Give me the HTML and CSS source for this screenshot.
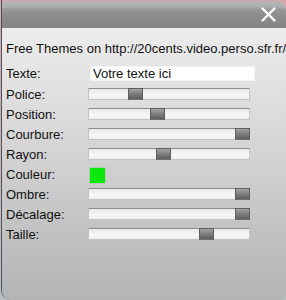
FILE: index.html
```html
<!DOCTYPE html>
<html lang="fr">
<head>
  <meta charset="UTF-8">
  <meta name="viewport" content="width=device-width, initial-scale=1.0">
  <title>Free Themes</title>
  <link rel="stylesheet" href="styles.css">
</head>
<body>
  <div id="window">
    <div class="titlebar">
      <svg class="close" width="15" height="15" viewBox="0 0 15 15">
        <path d="M1.5 1.5 L13.5 13.5 M13.5 1.5 L1.5 13.5" stroke="#fff" stroke-width="2.4" stroke-linecap="round"/>
      </svg>
    </div>

    <div class="panel">
      <div class="credits">Free Themes on http://20cents.video.perso.sfr.fr/</div>

      <div class="row row-text">
        <div class="label">Texte:</div>
        <div class="text-box">Votre texte ici</div>
      </div>
      <div class="row">
        <div class="label">Police:</div>
        <div class="track"><div class="thumb" style="left: 40px"></div></div>
      </div>
      <div class="row">
        <div class="label">Position:</div>
        <div class="track"><div class="thumb" style="left: 62px"></div></div>
      </div>
      <div class="row">
        <div class="label">Courbure:</div>
        <div class="track"><div class="thumb" style="left: 147px"></div></div>
      </div>
      <div class="row">
        <div class="label">Rayon:</div>
        <div class="track"><div class="thumb" style="left: 68px"></div></div>
      </div>
      <div class="row">
        <div class="label">Couleur:</div>
        <div class="swatch"></div>
      </div>
      <div class="row">
        <div class="label">Ombre:</div>
        <div class="track"><div class="thumb" style="left: 147px"></div></div>
      </div>
      <div class="row">
        <div class="label">Décalage:</div>
        <div class="track"><div class="thumb" style="left: 147px"></div></div>
      </div>
      <div class="row">
        <div class="label">Taille:</div>
        <div class="track"><div class="thumb" style="left: 111px"></div></div>
      </div>
    </div>
  </div>
</body>
</html>
```

FILE: styles.css
```css
/* Page */
body {
  margin: 0;
  height: 300px;
  overflow: hidden;
  font-family: "Liberation Sans", Arial, sans-serif;
  font-size: 13px;
  color: #111;
  background: linear-gradient(180deg, #d6a8ae 0%, #c9b7b9 60%, #b9c2c0 100%);
}

/* Window frame */
#window {
  height: 300px;
  margin-left: 1px;
  border-left: 1px solid #4b4f5e;
  border-top-right-radius: 12px;
  border-bottom-left-radius: 10px;
  border-bottom-right-radius: 6px;
  overflow: hidden;
  display: flex;
  flex-direction: column;
}

/* Title bar */
.titlebar {
  height: 28px;
  flex-shrink: 0;
  display: flex;
  justify-content: flex-end;
  align-items: center;
  padding: 1px 10px 0 0;
  box-sizing: border-box;
  background: linear-gradient(180deg, #cfa9ad 0px, #b4b2b1 3px, #a8afad 7px, #9a9a9a 9px, #8e8e8e 14px, #848484 28px);
}
.close {
  display: block;
}

/* Panel */
.panel {
  flex: 1;
  padding: 13px 0 0 4px;
  background: linear-gradient(180deg, #ececec 0%, #e2e2e2 20%, #d1d1d1 50%, #c2c2c2 75%, #b4b4b4 100%);
}
.credits {
  line-height: 16px;
  white-space: nowrap;
}

/* Rows */
.row {
  display: flex;
  align-items: center;
  height: 20px;
}
.row-text {
  height: 21px;
  margin-top: 6px;
}
.label {
  width: 82px;
  flex-shrink: 0;
}
.text-box {
  width: 162px;
  height: 15px;
  margin-left: 2px;
  padding-left: 3px;
  line-height: 15px;
  background: #fff;
  box-shadow: inset 0 0 0 1px #f4f4f4;
}

/* Sliders */
.track {
  position: relative;
  width: 162px;
  height: 12px;
  box-sizing: border-box;
  border: 1px solid #c4c4c4;
  border-top-color: #8e8e8e;
  background: linear-gradient(180deg, #e9e9e9, #f6f6f6 60%, #eeeeee);
}
.thumb {
  position: absolute;
  top: -1px;
  width: 15px;
  height: 12px;
  box-sizing: border-box;
  margin-left: -1px;
  border: 1px solid #5e5e5e;
  border-bottom-color: #6e6e6e;
  background: linear-gradient(180deg, #a4a4a4, #7c7c7c 50%, #5e5e5e);
}

/* Colour swatch */
.swatch {
  width: 15px;
  height: 15px;
  margin: 3px 0 0 2px;
  background: #0ce80c;
  box-shadow: 0 0 1px #3a3;
}
```
